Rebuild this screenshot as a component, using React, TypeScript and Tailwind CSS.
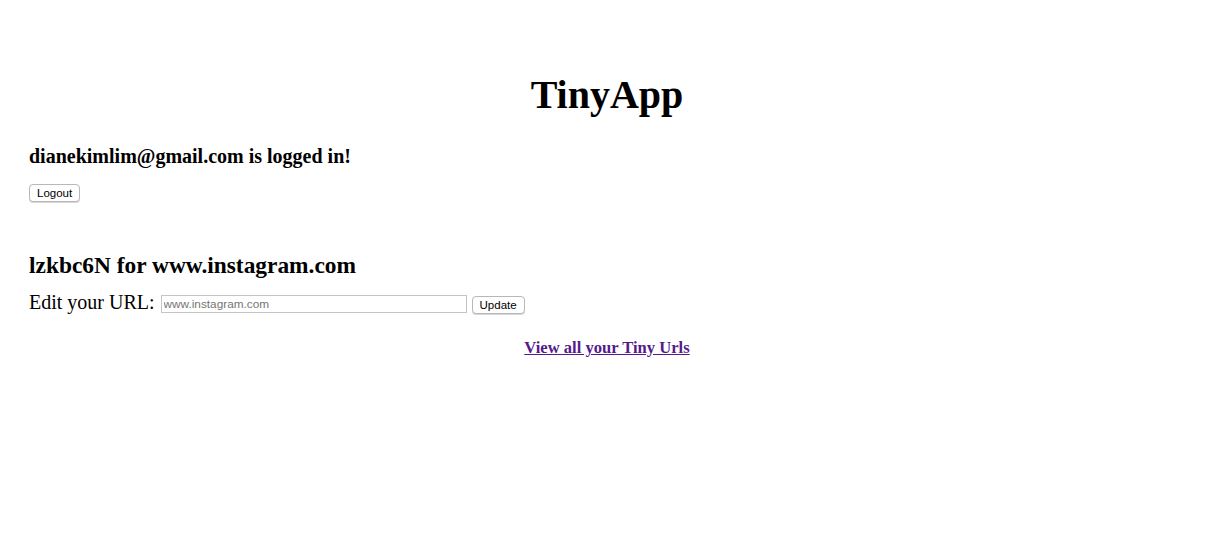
const serif = { fontFamily: '"Liberation Serif", "Times New Roman", serif' };

const App = () => {
  return (
    <div className="w-[1214px] min-h-[539px] bg-white px-[29px] text-black font-['Liberation_Serif',serif]">
      <h1 className="pt-[72px] text-center text-[40px] font-bold leading-[46px]">TinyApp</h1>

      <h4 className="mt-[27px] text-[20px] font-bold leading-[23px]">dianekimlim@gmail.com is logged in!</h4>
      <form className="mt-[16px] flex" onSubmit={(e) => e.preventDefault()}>
        <button
          type="submit"
          className="h-[18px] rounded-[4px] border border-[#b8b8b8] bg-white px-[7px] font-['Liberation_Sans',sans-serif] text-[11.5px] leading-[16px] text-black shadow-[0_1px_0_#d8d8d8]"
        >
          Logout
        </button>
      </form>

      <h3 className="mt-[50px] text-[23.4px] font-bold leading-[27px]">lzkbc6N for www.instagram.com</h3>
      <form className="mt-[12px] flex items-start" onSubmit={(e) => e.preventDefault()}>
        <label className="text-[20px] leading-[23px]">Edit your URL:</label>
        <input
          type="text"
          placeholder="www.instagram.com"
          className="ml-[6px] mt-[3.5px] h-[18px] w-[306px] border border-[#c4c4c4] bg-white px-[2px] font-['Liberation_Sans',sans-serif] text-[11.8px] text-black outline-none placeholder:text-[#757575]"
        />
        <button
          type="submit"
          className="ml-[5px] mt-[4.5px] h-[18px] rounded-[4px] border border-[#b8b8b8] bg-white px-[7px] font-['Liberation_Sans',sans-serif] text-[11.5px] leading-[16px] text-black shadow-[0_1px_0_#d8d8d8]"
        >
          Update
        </button>
      </form>

      <h5 className="mt-[24px] text-center text-[16.6px] font-bold leading-[19px]" style={serif}>
        <a href="#" className="text-[#551a8b] underline">View all your Tiny Urls</a>
      </h5>
    </div>
  );
};

export default App;
